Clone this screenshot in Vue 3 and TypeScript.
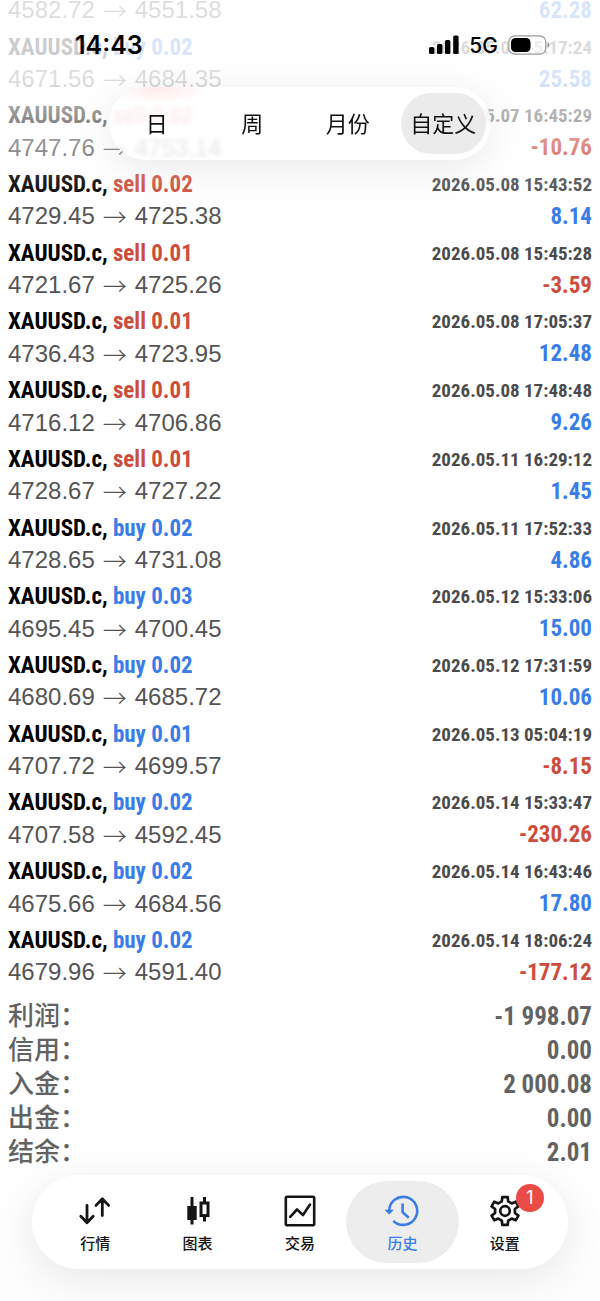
<script setup lang="ts">
import { ref } from 'vue'

interface Deal {
  side: 'buy' | 'sell'
  volume: string
  time: string
  open: string
  close: string
  profit: string
}

const deals: Deal[] = [
  { side: 'buy', volume: '0.02', time: '2026.05.06 15:17:24', open: '4671.56', close: '4684.35', profit: '25.58' },
  { side: 'sell', volume: '0.02', time: '2026.05.07 16:45:29', open: '4747.76', close: '4753.14', profit: '-10.76' },
  { side: 'sell', volume: '0.02', time: '2026.05.08 15:43:52', open: '4729.45', close: '4725.38', profit: '8.14' },
  { side: 'sell', volume: '0.01', time: '2026.05.08 15:45:28', open: '4721.67', close: '4725.26', profit: '-3.59' },
  { side: 'sell', volume: '0.01', time: '2026.05.08 17:05:37', open: '4736.43', close: '4723.95', profit: '12.48' },
  { side: 'sell', volume: '0.01', time: '2026.05.08 17:48:48', open: '4716.12', close: '4706.86', profit: '9.26' },
  { side: 'sell', volume: '0.01', time: '2026.05.11 16:29:12', open: '4728.67', close: '4727.22', profit: '1.45' },
  { side: 'buy', volume: '0.02', time: '2026.05.11 17:52:33', open: '4728.65', close: '4731.08', profit: '4.86' },
  { side: 'buy', volume: '0.03', time: '2026.05.12 15:33:06', open: '4695.45', close: '4700.45', profit: '15.00' },
  { side: 'buy', volume: '0.02', time: '2026.05.12 17:31:59', open: '4680.69', close: '4685.72', profit: '10.06' },
  { side: 'buy', volume: '0.01', time: '2026.05.13 05:04:19', open: '4707.72', close: '4699.57', profit: '-8.15' },
  { side: 'buy', volume: '0.02', time: '2026.05.14 15:33:47', open: '4707.58', close: '4592.45', profit: '-230.26' },
  { side: 'buy', volume: '0.02', time: '2026.05.14 16:43:46', open: '4675.66', close: '4684.56', profit: '17.80' },
  { side: 'buy', volume: '0.02', time: '2026.05.14 18:06:24', open: '4679.96', close: '4591.40', profit: '-177.12' },
]

const totals = [
  { label: '利润', value: '-1 998.07' },
  { label: '信用', value: '0.00' },
  { label: '入金', value: '2 000.08' },
  { label: '出金', value: '0.00' },
  { label: '结余', value: '2.01' },
]

const periods = ['日', '周', '月份', '自定义']
const period = ref('自定义')

const tabs = [
  { id: 'quotes', label: '行情' },
  { id: 'charts', label: '图表' },
  { id: 'trade', label: '交易' },
  { id: 'history', label: '历史' },
  { id: 'settings', label: '设置', badge: 1 },
]
const tab = ref('history')

const tone = (value: string) => (value.startsWith('-') ? 'loss' : 'gain')
</script>

<template>
  <div class="screen">
    <main class="history">
      <div class="line">
        <span class="prices">4582.72<span class="arrow">→</span>4551.58</span>
        <span class="profit gain">62.28</span>
      </div>
      <ul class="deals">
        <li v-for="deal in deals" :key="deal.time" class="deal">
          <div class="line">
            <span class="symbol">XAUUSD.c, <span :class="deal.side">{{ deal.side }} {{ deal.volume }}</span></span>
            <time class="time">{{ deal.time }}</time>
          </div>
          <div class="line">
            <span class="prices">{{ deal.open }}<span class="arrow">→</span>{{ deal.close }}</span>
            <span class="profit" :class="tone(deal.profit)">{{ deal.profit }}</span>
          </div>
        </li>
      </ul>
      <dl class="totals">
        <div v-for="total in totals" :key="total.label" class="total">
          <dt>{{ total.label }}：</dt>
          <dd>{{ total.value }}</dd>
        </div>
      </dl>
    </main>

    <div class="top-fade"></div>
    <div class="bottom-fade"></div>

    <header class="status">
      <span class="clock">14:43</span>
      <span class="indicators">
        <svg class="signal" viewBox="0 0 30 20" aria-hidden="true">
          <rect x="0" y="12" width="5.4" height="7" rx="1.6" />
          <rect x="8" y="9" width="5.4" height="10" rx="1.6" />
          <rect x="16" y="5" width="5.4" height="14" rx="1.6" />
          <rect x="24.2" y="0.5" width="5.4" height="18.5" rx="1.6" />
        </svg>
        <span class="network">5G</span>
        <svg class="battery" viewBox="0 0 42 20" aria-hidden="true">
          <rect x="0.8" y="0.8" width="37" height="18.4" rx="6" fill="#fff" fill-opacity="0.5" stroke="#999" stroke-width="1.2" />
          <rect x="3" y="3" width="19.500" height="14" rx="4.500" />
          <path d="M39.5 7v6c1.2-.5 2-1.6 2-3s-.8-2.5-2-3z" fill="#999" />
        </svg>
      </span>
    </header>

    <nav class="periods" aria-label="时间范围">
      <button
        v-for="item in periods"
        :key="item"
        type="button"
        class="period"
        :class="{ active: item === period }"
        @click="period = item"
      >{{ item }}</button>
    </nav>

    <nav class="tabs">
      <button
        v-for="item in tabs"
        :key="item.id"
        type="button"
        class="tab"
        :class="{ active: item.id === tab }"
        @click="tab = item.id"
      >
        <span class="icon">
          <svg v-if="item.id === 'quotes'" viewBox="0 0 32 32" fill="none" stroke="currentColor" stroke-width="2.800" stroke-linecap="round" stroke-linejoin="round">
            <path d="M8 10.500v17M1.800 21.200l6.200 6.600 6.200-6.600M23.300 20.500V4M17 10.400l6.300-6.600 6.300 6.600" />
          </svg>
          <svg v-else-if="item.id === 'charts'" viewBox="0 0 32 32" fill="none" stroke="currentColor">
            <path d="M10 2v27.500M22.500 2v6M22.500 21v5.500" stroke-width="3" />
            <rect x="5.300" y="11" width="9.400" height="14" fill="currentColor" stroke="none" />
            <rect x="19" y="8" width="7" height="12.600" stroke-width="3" />
          </svg>
          <svg v-else-if="item.id === 'trade'" viewBox="0 0 32 32" fill="none" stroke="currentColor" stroke-width="2.600" stroke-linejoin="round" stroke-linecap="round">
            <rect x="1.800" y="1.800" width="28.400" height="28.400" rx="1.500" />
            <path d="M6.200 21.800l6.800-7.300 6 5.500 7-10.500" />
          </svg>
          <svg v-else-if="item.id === 'history'" viewBox="0 0 32 32" fill="none" stroke="currentColor" stroke-width="2.600">
            <path d="M3.200 16A14 14 0 1 1 7.300 25.800" />
            <path d="M16.600 8.500v8.700l6.200 5.600" />
            <path d="M-1.500 14.800h9.400L3.200 19.600z" fill="currentColor" stroke="none" />
          </svg>
          <svg v-else viewBox="0 0 32 32" fill="none" stroke="currentColor" stroke-width="2.700" stroke-linejoin="round">
            <path transform="translate(16 16)" d="M-3.200-9.600L-2.700-13.900H2.700L3.200-9.600L6.700-7.600L10.700-9.300L13.400-4.600L9.900-2V2L13.400 4.600L10.700 9.300L6.700 7.600L3.200 9.600L2.700 13.900H-2.700L-3.200 9.600L-6.700 7.600L-10.700 9.300L-13.400 4.600L-9.900 2V-2L-13.400-4.600L-10.700-9.300L-6.700-7.600z" />
            <circle cx="16" cy="16" r="4.800" />
          </svg>
          <span v-if="item.badge" class="badge">{{ item.badge }}</span>
        </span>
        <span class="caption">{{ item.label }}</span>
      </button>
    </nav>
  </div>
</template>

<style>
body {
  margin: 0;
  background: #fff;
}
</style>

<style scoped>
.screen {
  position: relative;
  min-height: 100vh;
  display: flex;
  overflow: hidden;
  background: #fff;
  color: #000;
  font-family: "Liberation Sans", "Noto Sans CJK SC", sans-serif;
}

.history {
  flex: 1;
  display: flex;
  flex-direction: column;
  padding: 0 8px 133px;
}

.line {
  display: flex;
  justify-content: space-between;
  align-items: center;
  height: 32px;
  white-space: nowrap;
}

.history > .line {
  margin: -6px 0 5px;
}

.deals {
  flex: 1;
  display: grid;
  grid-auto-rows: 1fr;
  margin: 0;
  padding: 0;
  list-style: none;
}

.symbol,
.time,
.profit,
.total dd {
  font-family: "Roboto Condensed", "Liberation Sans", sans-serif;
  font-weight: 700;
}

.symbol,
.profit {
  font-size: 23px;
}

.time {
  font-size: 19px;
  color: #4b4b4d;
}

.prices {
  display: flex;
  align-items: center;
  gap: 8px;
  font-size: 24px;
  color: #555;
}

.arrow {
  font-family: "Noto Sans CJK SC", sans-serif;
  font-weight: 300;
  line-height: 32px;
}

.buy,
.gain {
  color: #3a7de8;
}

.sell,
.loss {
  color: #cd4d3c;
}

.totals {
  display: grid;
  grid-auto-rows: 1fr;
  height: 169px;
  margin: 6px 0 0;
}

.total {
  display: flex;
  justify-content: space-between;
  align-items: center;
  color: #636363;
}

.total dt {
  padding-bottom: 4px;
  font-family: "Noto Sans CJK SC", sans-serif;
  font-size: 26px;
  line-height: 30px;
  font-weight: 500;
}

.total dd {
  margin: 0;
  font-size: 25px;
}

.top-fade,
.bottom-fade {
  position: absolute;
  left: 0;
  right: 0;
  pointer-events: none;
}

.top-fade {
  top: 0;
  height: 210px;
  background: linear-gradient(rgba(255, 255, 255, 0.8) 0, rgba(255, 255, 255, 0.8) 80px, rgba(255, 255, 255, 0.58) 115px, rgba(255, 255, 255, 0.35) 147px, rgba(255, 255, 255, 0.1) 184px, rgba(255, 255, 255, 0) 210px);
}

.bottom-fade {
  bottom: 0;
  height: 140px;
  background: linear-gradient(rgba(252, 252, 252, 0), rgba(252, 252, 252, 0.8));
}

.status {
  position: absolute;
  top: 28px;
  left: 0;
  right: 0;
  display: flex;
  justify-content: space-between;
  align-items: center;
  height: 34px;
  padding: 0 50px 0 75px;
  font-family: Inter, sans-serif;
}

.clock {
  font-size: 25px;
  font-weight: 600;
}

.indicators {
  display: flex;
  align-items: center;
  gap: 10px;
}

.network {
  font-size: 21px;
  font-weight: 500;
}

.signal {
  width: 30px;
  height: 20px;
}

.battery {
  width: 42px;
  height: 20px;
}

.periods {
  position: absolute;
  top: 87px;
  left: 109px;
  right: 109px;
  display: grid;
  grid-template-columns: repeat(4, 1fr);
  padding: 6px 0;
  border-radius: 37px;
  background: radial-gradient(ellipse 50px 14px at 50px 2px, rgba(255, 215, 210, 0.5), rgba(255, 215, 210, 0)), rgba(255, 255, 255, 0.78);
  backdrop-filter: blur(2px);
  box-shadow: 0 8px 40px rgba(0, 0, 0, 0.09);
}

.period {
  height: 61px;
  margin: 0 5px;
  padding: 0 0 4px;
  border: 0;
  border-radius: 31px;
  background: none;
  color: #111;
  font-family: "Noto Sans CJK SC", sans-serif;
  font-size: 22px;
  white-space: nowrap;
}

.period.active {
  background: #ebebeb;
}

.tabs {
  position: absolute;
  left: 32px;
  right: 32px;
  bottom: 32px;
  display: grid;
  grid-template-columns: repeat(5, 1fr);
  padding: 6px 12px;
  border-radius: 47px;
  background: #fff;
  box-shadow: 0 8px 40px rgba(0, 0, 0, 0.09);
}

.tab {
  display: flex;
  flex-direction: column;
  align-items: center;
  gap: 5px;
  height: 82px;
  margin: 0 -5px;
  padding: 14px 0 0;
  border: 0;
  border-radius: 41px;
  background: none;
  color: #151515;
  font-family: "Noto Sans CJK SC", sans-serif;
}

.tab.active {
  background: #ededed;
  color: #3a7de8;
}

.icon {
  position: relative;
  width: 32px;
  height: 32px;
}

.icon svg {
  display: block;
  width: 32px;
  height: 32px;
  overflow: visible;
}

.caption {
  font-size: 15px;
  line-height: 22px;
  font-weight: 500;
}

.badge {
  position: absolute;
  top: -11px;
  right: -23px;
  width: 28px;
  height: 28px;
  border-radius: 50%;
  background: #e94b47;
  color: #fff;
  font-family: Inter, sans-serif;
  font-size: 18px;
  line-height: 28px;
  text-align: center;
}
</style>
